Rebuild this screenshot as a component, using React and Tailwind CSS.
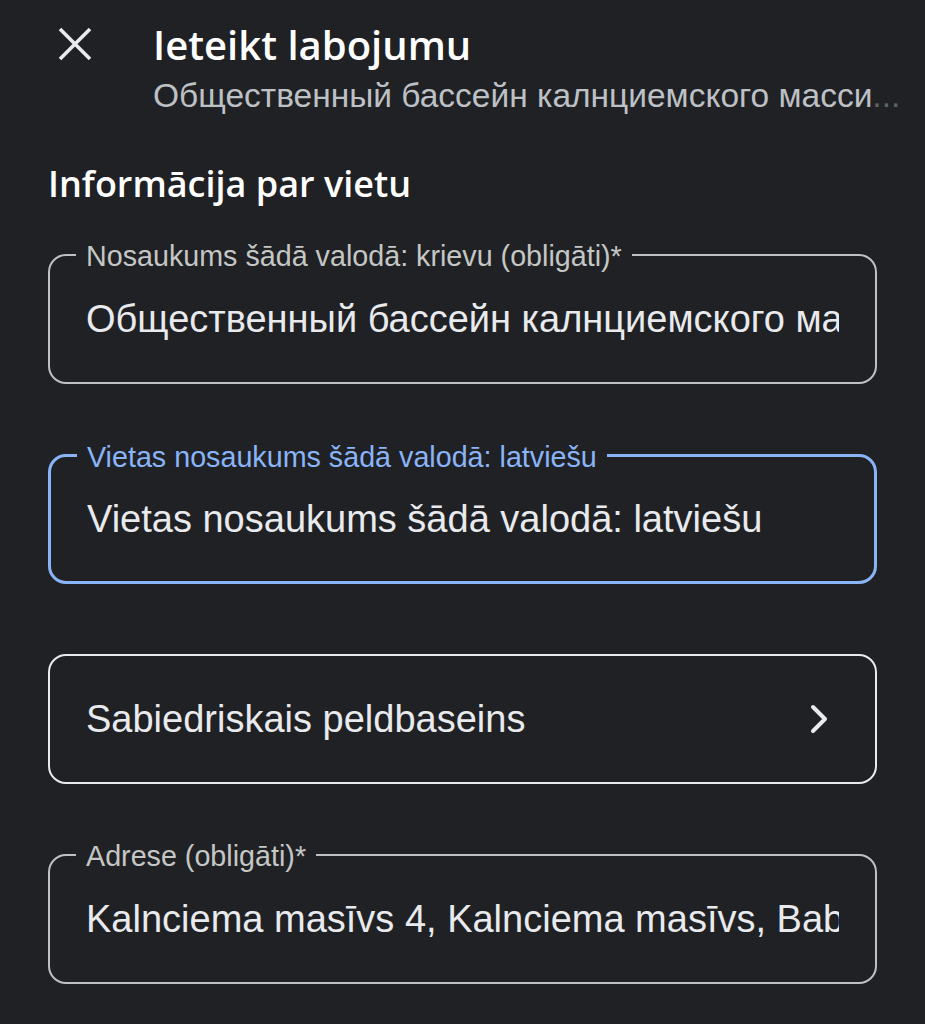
import React from 'react';

const sans = { fontFamily: '"Liberation Sans", Arial, sans-serif' };
const display = { fontFamily: '"Open Sans", Roboto, sans-serif' };

const OutlinedField = ({ label, value, focused }) => {
  return (
    <div
      className={
        'relative h-[130px] rounded-[18px] flex items-center px-[36px] ' +
        (focused ? 'border-[3px] border-[#8ab4f8]' : 'border-2 border-[#bdc1c6]')
      }
    >
      <span
        className={
          'absolute left-[26px] top-0 -translate-y-1/2 bg-[#202124] px-[10px] text-[28.7px] leading-[32px] whitespace-nowrap ' +
          (focused ? 'text-[#8ab4f8]' : 'text-[#c4c7c5]')
        }
      >
        {label}
      </span>
      <div className="w-full overflow-hidden whitespace-nowrap text-[38px] leading-[44px] text-[#e8eaed]">
        {value}
      </div>
    </div>
  );
};

const App = () => {
  return (
    <div className="min-h-screen bg-[#202124] text-[#e8eaed]" style={sans}>
      {/* top bar */}
      <div className="flex pt-[18px]">
        <div className="w-[153px] shrink-0 flex justify-start pl-[57px] pt-[8px]">
          <svg width="36" height="36" viewBox="0 0 36 36" fill="none" stroke="#e8eaed" strokeWidth="3.6">
            <path d="M3 3L33 33M33 3L3 33" />
          </svg>
        </div>
        <div className="min-w-0 pr-[20px]">
          <h1 className="text-[40px] leading-[54px] font-semibold text-white" style={display}>Ieteikt labojumu</h1>
          <p className="mt-[4px] text-[33.5px] leading-[40px] text-[#bdc1c6] whitespace-nowrap">
            Общественный бассейн калнциемского масси
            <span className="text-[#5f6368]">...</span>
          </p>
        </div>
      </div>

      <div className="px-[48px] pt-[46px]">
        <h2 className="text-[36px] leading-[44px] font-semibold text-white" style={display}>Informācija par vietu</h2>

        <div className="mt-[48px] flex flex-col gap-[70px]">
          <OutlinedField
            label="Nosaukums šādā valodā: krievu (obligāti)*"
            value="Общественный бассейн калнциемского массива"
          />
          <OutlinedField
            label="Vietas nosaukums šādā valodā: latviešu"
            value="Vietas nosaukums šādā valodā: latviešu"
            focused
          />
          <button className="h-[130px] rounded-[18px] border-2 border-[#e8eaed] flex items-center justify-between pl-[36px] pr-[46px] text-left">
            <span className="text-[38px] leading-[44px] text-[#e8eaed]">Sabiedriskais peldbaseins</span>
            <svg width="20" height="30" viewBox="0 0 20 30" fill="none" stroke="#e8eaed" strokeWidth="4" strokeLinecap="round" strokeLinejoin="round">
              <path d="M4 3L16 15L4 27" />
            </svg>
          </button>
          <OutlinedField
            label="Adrese (obligāti)*"
            value="Kalnciema masīvs 4, Kalnciema masīvs, Babītes pagasts"
          />
        </div>
      </div>
    </div>
  );
};

export default App;
